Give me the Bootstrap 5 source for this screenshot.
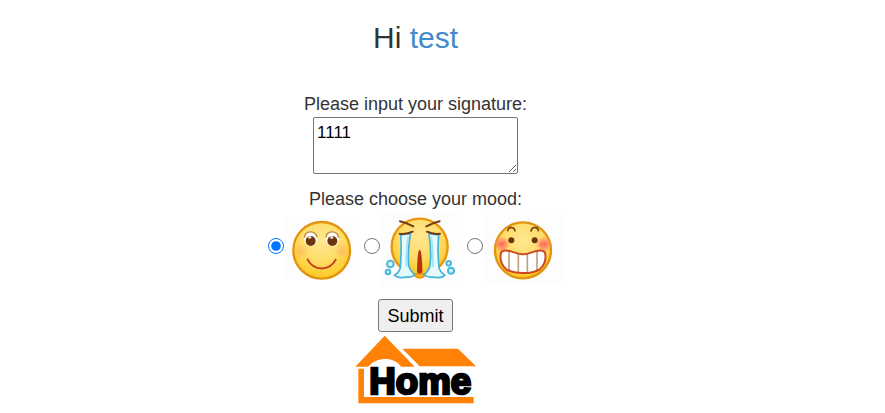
<!DOCTYPE html>
<html lang="en">
<head>
<meta charset="utf-8">
<meta name="viewport" content="width=device-width, initial-scale=1">
<title>Signature</title>
<link href="https://cdn.jsdelivr.net/npm/bootstrap@5.3.0/dist/css/bootstrap.min.css" rel="stylesheet">
<style>
body { font-family: "Liberation Sans", Arial, sans-serif; font-size: 18px; line-height: 26px; color: #333; background: #fff; }
.page { padding: 21px 54px 0 0; }
.greeting { font-size: 30px; line-height: 33px; margin-bottom: 37px; }
.greeting a { color: #428bca; }
.signature { width: 205px; height: 57px; padding: 2px 3px; font-size: 17px; line-height: 25px; color: #000; border: 1px solid #767676; border-radius: 2px; margin-bottom: 12px; }
.moods { gap: 5px; margin-bottom: 11px; }
.moods input { width: 16px; height: 16px; margin: 0 0 8px; }
.face { height: 76px; }
.send { height: 33px; padding: 0 8px; color: #000; background: #efefef; border: 1px solid #767676; border-radius: 3px; margin-bottom: 3px; }
.logo { width: 122px; height: 70px; }
.logo text { font: bold 110px "Liberation Sans", Arial, sans-serif; }
</style>
</head>
<body>
<main class="page text-center">
  <h1 class="greeting fw-normal">Hi <a href="#" class="text-decoration-none">test</a></h1>
  <form class="d-flex flex-column align-items-center">
    <label for="signature">Please input your signature:</label>
    <textarea id="signature" class="signature d-block">1111</textarea>
    <div id="mood-label">Please choose your mood:</div>
    <div class="moods d-flex justify-content-center" role="radiogroup" aria-labelledby="mood-label">
      <div class="d-flex align-items-center">
        <input type="radio" name="mood" id="happy" checked>
        <label for="happy" class="d-flex" aria-label="Happy">
          <svg class="face" width="75" height="76" viewBox="72 6 225 228">
            <defs>
              <radialGradient id="skin" cx="50%" cy="32%" r="70%"><stop offset="0" stop-color="#ffe793"/><stop offset=".55" stop-color="#ffdc66"/><stop offset="1" stop-color="#fdc61c"/></radialGradient>
              <radialGradient id="blush"><stop offset="0" stop-color="#ff6f5c"/><stop offset=".5" stop-color="#ff7d66" stop-opacity=".7"/><stop offset="1" stop-color="#ff8d66" stop-opacity="0"/></radialGradient>
            </defs>
            <path fill="#fdfdfd" d="M72 24h225v186H72z"/>
            <circle cx="185" cy="121" r="85" fill="url(#skin)" stroke="#e2930f" stroke-width="7"/>
            <circle cx="123" cy="123" r="24" fill="url(#blush)" opacity=".25"/>
            <circle cx="245" cy="123" r="24" fill="url(#blush)" opacity=".25"/>
            <ellipse cx="152" cy="87" rx="20" ry="22" fill="#fff"/>
            <ellipse cx="217" cy="87" rx="20" ry="22" fill="#fff"/>
            <path d="M133 83c3-23 34-23 38-1M198 82c3-22 34-22 38 1" fill="none" stroke="#b98238" stroke-width="4"/>
            <circle cx="152" cy="93" r="15" fill="#6c3409"/><circle cx="217" cy="93" r="15" fill="#6c3409"/>
            <circle cx="149" cy="82" r="5" fill="#e5d5c4"/><circle cx="215" cy="82" r="5" fill="#e5d5c4"/>
            <path d="M143 149c18 35 66 35 84 0" fill="none" stroke="#c3421b" stroke-width="6" stroke-linecap="round"/>
          </svg>
        </label>
      </div>
      <div class="d-flex align-items-center">
        <input type="radio" name="mood" id="crying">
        <label for="crying" class="d-flex" aria-label="Crying">
          <svg class="face" width="82" height="76" viewBox="75 6 246 228">
            <path fill="#fdfdfd" d="M75 6h246v225H75z"/>
            <circle cx="194" cy="110" r="84" fill="url(#skin)" stroke="#e8960f" stroke-width="7"/>
            <path d="M177 195q17 16 34 0" fill="#fdc61c" stroke="#e8960f" stroke-width="6"/>
            <g fill="#e5fbff" stroke="#41b5d8" stroke-width="5" stroke-linejoin="round">
              <path d="M137 75l29-4c-5 35-8 68-5 95 3 17 13 19 17 29-9 10-22 5-32 7-11 2-21-1-28-6 12-7 17-13 18-25 2-29 4-64 1-96z"/>
              <path d="M222 71l29 4c-3 32-2 67 1 96 1 12 8 18 18 25-7 6-19 8-29 6-10-3-22 4-32-7 4-10 14-12 16-29 4-27 2-60-3-95z"/>
            </g>
            <path d="M159 80c-5 43-7 69-4 91M229 80c5 43 7 69 4 91" fill="none" stroke="#9fe2f3" stroke-width="5"/>
            <g fill="#d5f5fb" stroke="#46b8db" stroke-width="6"><circle cx="106" cy="162" r="10"/><circle cx="99" cy="186" r="7"/><circle cx="281" cy="160" r="7"/><circle cx="288" cy="182" r="9"/></g>
            <path d="M194 119c6 0 8 43 8 67-3 6-13 6-16 0 0-24 2-67 8-67z" fill="#b9360c"/>
            <path d="M135 34q21 5 40 15M254 34q-21 5-40 15M134 71q20 3 39-6M255 71q-20 3-39-6" fill="none" stroke="#743a12" stroke-width="6" stroke-linecap="round"/>
          </svg>
        </label>
      </div>
      <div class="d-flex align-items-center">
        <input type="radio" name="mood" id="grinning">
        <label for="grinning" class="d-flex" aria-label="Grinning">
          <svg class="face" width="80" height="76" viewBox="69 6 240 228">
            <path fill="#fdfdfd" d="M69 16h240v203H69z"/>
            <circle cx="189" cy="121" r="84" fill="url(#skin)" stroke="#e2930f" stroke-width="7"/>
            <circle cx="126" cy="103" r="25" fill="url(#blush)"/><circle cx="252" cy="103" r="25" fill="url(#blush)"/>
            <path d="M114 107l7-10M125 107l8-11M241 107l7-10M253 107l7-10" stroke="#ec654c" stroke-width="3"/>
            <path d="M143 62c3-13 20-13 22 1M213 63c3-14 20-14 22-1" fill="none" stroke="#7b4214" stroke-width="5" stroke-linecap="round"/>
            <circle cx="154" cy="91" r="9" fill="#6c3409"/><circle cx="224" cy="91" r="9" fill="#6c3409"/>
            <path d="M122 132c3-14 18-11 31-8 13 4 22 9 36 9s23-5 36-9c13-3 28-6 31 8 2 17-3 35-17 46-25 15-75 15-100 0-14-11-19-29-17-46z" fill="#fff"/>
            <path d="M147 124v61M175 132v56M202 132v56M231 124v61" stroke="#c3a083" stroke-width="5"/>
            <path d="M122 132c3-14 18-11 31-8 13 4 22 9 36 9s23-5 36-9c13-3 28-6 31 8 2 17-3 35-17 46-25 15-75 15-100 0-14-11-19-29-17-46z" fill="none" stroke="#cf4822" stroke-width="6"/>
          </svg>
        </label>
      </div>
    </div>
    <button type="button" class="send">Submit</button>
  </form>
  <a href="#" class="d-inline-block lh-1" aria-label="Home">
    <svg class="logo d-block" viewBox="30 135 366 210">
      <path d="M119 137L31 230h38c28-31 77-31 100 0h40zM172 176h167l54 53H224zM40 236h17v85h329v19H40z" fill="#ff8207"/>
      <text x="73" y="311" fill="#000" stroke="#000" stroke-width="8" stroke-linejoin="miter">Home</text>
    </svg>
  </a>
</main>
<script src="https://cdn.jsdelivr.net/npm/bootstrap@5.3.0/dist/js/bootstrap.bundle.min.js"></script>
</body>
</html>
